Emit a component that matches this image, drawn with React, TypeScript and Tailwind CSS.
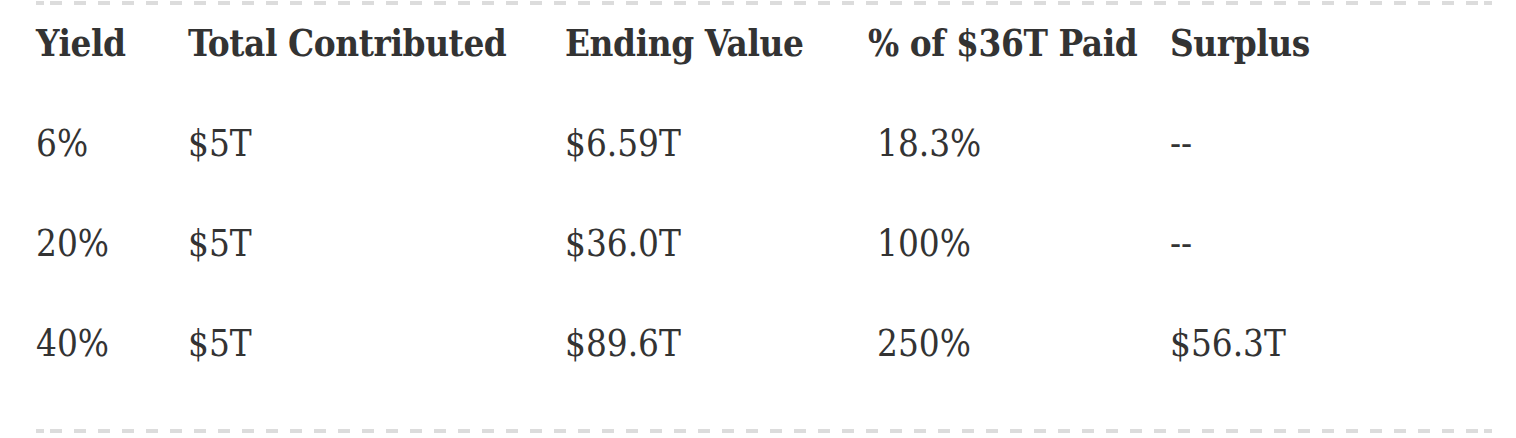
const rows = [
  { yieldPct: '6%', contributed: '$5T', ending: '$6.59T', paid: '18.3%', surplus: '--' },
  { yieldPct: '20%', contributed: '$5T', ending: '$36.0T', paid: '100%', surplus: '--' },
  { yieldPct: '40%', contributed: '$5T', ending: '$89.6T', paid: '250%', surplus: '$56.3T' },
];

const headers = ['Yield', 'Total Contributed', 'Ending Value', '% of $36T Paid', 'Surplus'];

const rowClass = 'grid grid-cols-[152px_377px_303px_302px_1fr] h-[100px] pt-[18px] leading-[42px] whitespace-nowrap';

// dashed rule: 8px end caps, 12px dashes every 24px in between
function DashedRule() {
  return (
    <div className="h-[4px] w-full bg-[image:linear-gradient(90deg,#dcdcdc_0_8px,transparent_8px_calc(100%_-_8px),#dcdcdc_calc(100%_-_8px)),repeating-linear-gradient(90deg,#dcdcdc_-10px_2px,transparent_2px_14px)]" />
  );
}

export default function App() {
  return (
    <div className="bg-white w-full min-h-[438px] pt-px">
      <div
        className="ml-[36px] w-[1456px] text-[#333] text-[36.5px]"
        style={{ fontFamily: '"DejaVu Serif Condensed", "DejaVu Serif", serif' }}
      >
        <DashedRule />
        <div className={`${rowClass} font-bold tracking-[-0.4px]`}>
          {headers.map((h) => (
            <div key={h}>{h}</div>
          ))}
        </div>
        {rows.map((r) => (
          <div key={r.yieldPct} className={rowClass}>
            <div>{r.yieldPct}</div>
            <div>{r.contributed}</div>
            <div>{r.ending}</div>
            <div className="pl-[9px]">{r.paid}</div>
            <div>{r.surplus}</div>
          </div>
        ))}
        <div className="h-[24px]" />
        <DashedRule />
      </div>
    </div>
  );
}
